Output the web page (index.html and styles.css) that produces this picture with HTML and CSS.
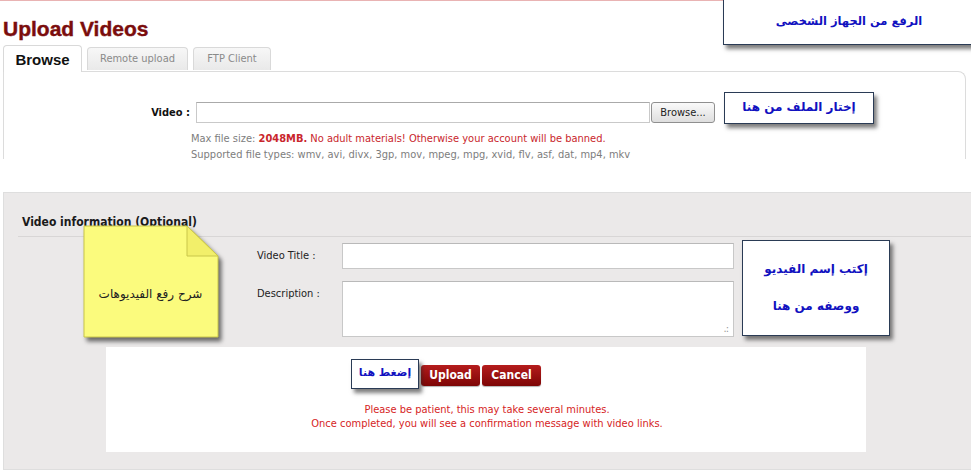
FILE: index.html
```html
<!DOCTYPE html>
<html>
<head>
  <title>Upload Videos</title>
  <link rel="stylesheet" href="styles.css">
</head>
<body>
  <div class="page">
    <div class="top-line"></div>
    <h1 class="page-title">Upload Videos</h1>

    <div class="tabs">
      <div class="tab active">Browse</div>
      <div class="tab">Remote upload</div>
      <div class="tab">FTP Client</div>
    </div>

    <div class="upload-panel">
      <div class="file-row">
        <label class="file-label">Video :</label>
        <div class="file-input"></div>
        <div class="browse-btn">Browse...</div>
      </div>
      <div class="hints">
        <div>Max file size: <b class="size">2048MB.</b> <span class="warn">No adult materials! Otherwise your account will be banned.</span></div>
        <div>Supported file types: wmv, avi, divx, 3gp, mov, mpeg, mpg, xvid, flv, asf, dat, mp4, mkv</div>
      </div>
    </div>

    <div class="info-section">
      <h2 class="info-title">Video information (Optional)</h2>
      <div class="info-form">
        <label class="form-label">Video Title :</label>
        <div class="text-input"></div>
        <label class="form-label">Description :</label>
        <div class="text-area"><span class="grip">.:</span></div>
      </div>
      <div class="submit-box">
        <div class="buttons">
          <div class="btn">Upload</div>
          <div class="btn">Cancel</div>
        </div>
        <div class="notice">
          Please be patient, this may take several minutes.<br>
          Once completed, you will see a confirmation message with video links.
        </div>
      </div>
    </div>

    <!-- annotations laid over the screenshot -->
    <div class="callout c-device">الرفع من الجهاز الشخصى</div>
    <div class="callout c-choose">إختار الملف من هنا</div>
    <div class="callout c-title">إكتب إسم الفيديو<br>ووصفه من هنا</div>
    <div class="callout c-click">إضغط هنا</div>

    <div class="sticky">
      <svg class="sticky-bg" width="140" height="118" viewBox="0 0 140 118">
        <polygon points="1,1 104,1 135,31 135,112 1,112" fill="#fbfb7d" stroke="#c9c64a" stroke-width="1"/>
        <polygon points="104,1 104,31 135,31" fill="#f2ef6a" stroke="#c9c64a" stroke-width="1"/>
      </svg>
      <span class="sticky-text">شرح رفع الفيديوهات</span>
    </div>
  </div>
</body>
</html>
```

FILE: styles.css
```css
* {
  margin: 0;
  padding: 0;
  box-sizing: border-box;
}

body {
  width: 971px;
  height: 471px;
  overflow: hidden;
  background: #fff;
  font-family: "DejaVu Sans Condensed", "DejaVu Sans", sans-serif;
  font-stretch: condensed;
  font-size: 11px;
  color: #333;
}

.page {
  position: relative;
  height: 471px;
  padding-left: 3px;
}

.top-line {
  height: 1px;
  width: 725px;
  margin-left: -3px;
  background: #e9b3b3;
}

.page-title {
  font-family: "Liberation Sans", sans-serif;
  font-stretch: normal;
  font-size: 21px;
  font-weight: bold;
  color: #7b0d0d;
  line-height: 26px;
  margin-top: 15px;
  -webkit-text-stroke: 0.4px #7b0d0d;
}

/* Tabs */
.tabs {
  display: flex;
  align-items: flex-end;
  gap: 5px;
  height: 28px;
  margin-top: 1px;
  position: relative;
  z-index: 1;
}

.tab {
  height: 23px;
  line-height: 21px;
  margin-bottom: 1px;
  border: 1px solid #d9d9d9;
  border-bottom: none;
  border-radius: 4px 4px 0 0;
  background: linear-gradient(#f7f7f7, #e9e9e9);
  color: #8a8a8a;
  font-size: 11px;
  text-align: center;
}

.tab:nth-child(2) { width: 101px; }
.tab:nth-child(3) { width: 78px; }

.tab.active {
  width: 79px;
  height: 27px;
  margin-bottom: -1px;
  line-height: 27px;
  background: #fff;
  color: #111;
  font-family: "Liberation Sans", sans-serif;
  font-stretch: normal;
  font-weight: bold;
  font-size: 15px;
}

/* Browse panel */
.upload-panel {
  width: 963px;
  height: 88px;
  border: 1px solid #dcdcdc;
  border-bottom: none;
  border-radius: 0 8px 0 0;
  padding-top: 30px;
}

.file-row {
  display: flex;
  align-items: center;
  padding-left: 6px;
}

.file-label {
  width: 180px;
  text-align: right;
  font-weight: bold;
  color: #111;
  margin-right: 6px;
}

.file-input {
  width: 454px;
  height: 21px;
  border: 1px solid #c9c9c9;
  border-top-color: #aaa;
  background: #fff;
}

.browse-btn {
  width: 64px;
  height: 21px;
  margin-left: 1px;
  border: 1px solid #8f8f8f;
  border-radius: 3px;
  background: linear-gradient(#fafafa, #dedede);
  text-align: center;
  line-height: 19px;
  font-size: 11px;
  color: #222;
}

.hints {
  margin: 8px 0 0 187px;
  line-height: 16px;
  color: #7d7d7d;
}

.hints .size {
  color: #c9262c;
}

.hints .warn {
  color: #c9262c;
}

/* Video information */
.info-section {
  margin-top: 33px;
  height: 278px;
  background: #ebe9e9;
  border: 1px solid #dedede;
  border-right: none;
  padding: 21px 0 0 14px;
}

.info-title {
  font-size: 12px;
  font-weight: bold;
  color: #1a1a1a;
  line-height: 16px;
  padding: 0 0 6px 4px;
  border-bottom: 1px solid #d8d6d6;
}

.info-form {
  display: grid;
  grid-template-columns: 85px 392px;
  row-gap: 12px;
  margin: 6px 0 0 239px;
}

.form-label {
  color: #222;
  line-height: 26px;
}

.text-input,
.text-area {
  background: #fff;
  border: 1px solid #c8c8c8;
  border-top-color: #b9b9b9;
}

.text-input {
  height: 26px;
}

.text-area {
  height: 56px;
  position: relative;
}

.grip {
  position: absolute;
  right: 5px;
  bottom: 2px;
  color: #999;
  font-size: 11px;
  line-height: 10px;
  letter-spacing: -1px;
}

.submit-box {
  width: 760px;
  height: 105px;
  margin: 10px 0 0 88px;
  background: #fff;
  padding-top: 18px;
  text-align: center;
}

.buttons {
  display: flex;
  justify-content: center;
  gap: 2px;
  padding-right: 10px;
}

.btn {
  width: 59px;
  height: 21px;
  line-height: 21px;
  border-radius: 3px;
  background: linear-gradient(#b51c1c, #7d0505);
  color: #fff;
  font-weight: bold;
  font-size: 12px;
  box-shadow: 0 1px 1px rgba(0, 0, 0, 0.3);
}

.notice {
  margin-top: 17px;
  line-height: 14px;
  color: #d62424;
  padding-left: 2px;
}

/* Annotation boxes */
.callout {
  position: absolute;
  background: #fff;
  border: 1px solid #2a3b55;
  box-shadow: 3px 4px 4px rgba(40, 40, 40, 0.6);
  color: #1111c0;
  font-family: "DejaVu Sans", sans-serif;
  font-stretch: normal;
  font-weight: bold;
  font-size: 12px;
  text-align: center;
  direction: rtl;
}

.c-device {
  left: 723px;
  top: -2px;
  width: 252px;
  height: 47px;
  line-height: 44px;
  font-size: 11.5px;
}

.c-choose {
  left: 724px;
  top: 92px;
  width: 150px;
  height: 32px;
  line-height: 28px;
}

.c-title {
  left: 742px;
  top: 240px;
  width: 148px;
  height: 96px;
  line-height: 37px;
  padding-top: 10px;
}

.c-click {
  left: 351px;
  top: 359px;
  width: 68px;
  height: 30px;
  line-height: 26px;
  font-size: 11px;
}

.sticky {
  position: absolute;
  left: 83px;
  top: 225px;
  width: 140px;
  height: 118px;
}

.sticky-bg {
  position: absolute;
  left: 0;
  top: 0;
  filter: drop-shadow(3px 4px 2px rgba(0, 0, 0, 0.55));
}

.sticky-text {
  position: absolute;
  left: 0;
  top: 62px;
  width: 135px;
  text-align: center;
  font-family: "DejaVu Sans", sans-serif;
  font-stretch: normal;
  font-size: 12px;
  color: #222;
  direction: rtl;
}
```
